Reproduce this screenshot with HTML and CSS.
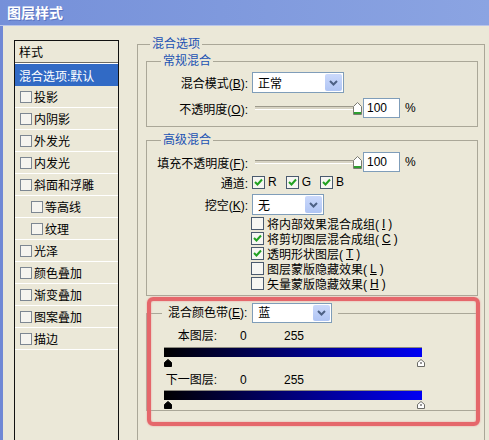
FILE: index.html
```html
<!DOCTYPE html>
<html lang="zh">
<head>
  <meta charset="UTF-8">
  <title>图层样式</title>
  <link rel="stylesheet" href="styles.css">
</head>
<body>
<div class="window">
  <div class="titlebar">图层样式</div>

  <div class="frame">
    <!-- left: style list -->
    <ul class="styles-list">
      <li class="list-head">样式</li>
      <li class="selected">混合选项:默认</li>
      <li><span class="box"></span>投影</li>
      <li><span class="box"></span>内阴影</li>
      <li><span class="box"></span>外发光</li>
      <li><span class="box"></span>内发光</li>
      <li><span class="box"></span>斜面和浮雕</li>
      <li class="sub"><span class="box"></span>等高线</li>
      <li class="sub"><span class="box"></span>纹理</li>
      <li><span class="box"></span>光泽</li>
      <li><span class="box"></span>颜色叠加</li>
      <li><span class="box"></span>渐变叠加</li>
      <li><span class="box"></span>图案叠加</li>
      <li><span class="box"></span>描边</li>
    </ul>

    <!-- right: blending options -->
    <div class="options">
      <fieldset class="group outer">
        <legend>混合选项</legend>

        <fieldset class="group">
          <legend>常规混合</legend>
          <div class="group-body normal">
            <div class="row tall">
              <span class="lbl">混合模式(<u>B</u>):</span>
              <div class="combo mode">正常<span class="arrow"><svg width="9" height="6" viewBox="0 0 9 6"><path d="M1 1 L4.5 4.5 L8 1" fill="none" stroke="#4d6185" stroke-width="2"/></svg></span></div>
            </div>
            <div class="row gap5">
              <span class="lbl">不透明度(<u>O</u>):</span>
              <div class="slider"><span class="track"></span><svg class="knob" width="9" height="13" viewBox="0 0 9 13"><path d="M0.5 4.5 L4.5 0.5 L8.5 4.5 V12.5 H0.5 Z" fill="#fff" stroke="#7a7a72"/><rect x="1" y="10" width="7" height="2" fill="#2e9e2e"/></svg></div>
              <span class="num">100</span>
              <span class="pct">%</span>
            </div>
          </div>
        </fieldset>

        <fieldset class="group advanced">
          <legend>高级混合</legend>
          <div class="group-body adv">
            <div class="row">
              <span class="lbl">填充不透明度(<u>F</u>):</span>
              <div class="slider"><span class="track"></span><svg class="knob" width="9" height="13" viewBox="0 0 9 13"><path d="M0.5 4.5 L4.5 0.5 L8.5 4.5 V12.5 H0.5 Z" fill="#fff" stroke="#7a7a72"/><rect x="1" y="10" width="7" height="2" fill="#2e9e2e"/></svg></div>
              <span class="num">100</span>
              <span class="pct">%</span>
            </div>
            <div class="row">
              <span class="lbl">通道:</span>
              <span class="chk"><span class="cb on"><svg width="9" height="9" viewBox="0 0 9 9"><path d="M1 4 L3.5 6.5 L8 1.5" fill="none" stroke="#21a121" stroke-width="2"/></svg></span>R</span>
              <span class="chk"><span class="cb on"><svg width="9" height="9" viewBox="0 0 9 9"><path d="M1 4 L3.5 6.5 L8 1.5" fill="none" stroke="#21a121" stroke-width="2"/></svg></span>G</span>
              <span class="chk"><span class="cb on"><svg width="9" height="9" viewBox="0 0 9 9"><path d="M1 4 L3.5 6.5 L8 1.5" fill="none" stroke="#21a121" stroke-width="2"/></svg></span>B</span>
            </div>
            <div class="row tall knockout">
              <span class="lbl">挖空(<u>K</u>):</span>
              <div class="combo ko">无<span class="arrow"><svg width="9" height="6" viewBox="0 0 9 6"><path d="M1 1 L4.5 4.5 L8 1" fill="none" stroke="#4d6185" stroke-width="2"/></svg></span></div>
            </div>
            <div class="checks">
              <div class="opt"><span class="cb"></span>将内部效果混合成组(<u>I</u>)</div>
              <div class="opt"><span class="cb on"><svg width="9" height="9" viewBox="0 0 9 9"><path d="M1 4 L3.5 6.5 L8 1.5" fill="none" stroke="#21a121" stroke-width="2"/></svg></span>将剪切图层混合成组(<u>C</u>)</div>
              <div class="opt"><span class="cb on"><svg width="9" height="9" viewBox="0 0 9 9"><path d="M1 4 L3.5 6.5 L8 1.5" fill="none" stroke="#21a121" stroke-width="2"/></svg></span>透明形状图层(<u>T</u>)</div>
              <div class="opt"><span class="cb"></span>图层蒙版隐藏效果(<u>L</u>)</div>
              <div class="opt"><span class="cb"></span>矢量蒙版隐藏效果(<u>H</u>)</div>
            </div>
          </div>
        </fieldset>

        <fieldset class="group band">
          <legend>
            <span>混合颜色带(<u>E</u>):</span>
            <span class="combo blue">蓝<span class="arrow"><svg width="9" height="6" viewBox="0 0 9 6"><path d="M1 1 L4.5 4.5 L8 1" fill="none" stroke="#4d6185" stroke-width="2"/></svg></span></span>
          </legend>
          <div class="band-body">
            <div class="band-head first">
              <span class="name">本图层:</span><span class="min">0</span><span>255</span>
            </div>
            <div class="bar"></div>
            <div class="stops">
              <svg width="8" height="8" viewBox="0 0 8 8"><path d="M0.5 3.5 L4 0.5 L7.5 3.5 V7.5 H0.5 Z" fill="#000" stroke="#000"/></svg>
              <svg width="8" height="8" viewBox="0 0 8 8"><path d="M0.5 3.5 L4 0.5 L7.5 3.5 V7.5 H0.5 Z" fill="#fff" stroke="#6b6b66"/><path d="M4 3 V5" stroke="#333"/></svg>
            </div>
            <div class="band-head">
              <span class="name">下一图层:</span><span class="min">0</span><span>255</span>
            </div>
            <div class="bar second"></div>
            <div class="stops second">
              <svg width="8" height="8" viewBox="0 0 8 8"><path d="M0.5 3.5 L4 0.5 L7.5 3.5 V7.5 H0.5 Z" fill="#000" stroke="#000"/></svg>
              <svg width="8" height="8" viewBox="0 0 8 8"><path d="M0.5 3.5 L4 0.5 L7.5 3.5 V7.5 H0.5 Z" fill="#fff" stroke="#6b6b66"/><path d="M4 3 V5" stroke="#333"/></svg>
            </div>
          </div>
        </fieldset>
      </fieldset>
    </div>
  </div>

  <!-- red annotation box drawn over the dialog -->
  <div class="mark"></div>
</div>
</body>
</html>
```

FILE: styles.css
```css
* {
  box-sizing: border-box;
}

html, body {
  margin: 0;
}

body {
  width: 489px;
  height: 440px;
  overflow: hidden;
  background: #ebe8d8;
  font-family: "Liberation Sans", "Noto Sans CJK SC", sans-serif;
  font-size: 12px;
  color: #000;
}

.window {
  position: relative;
  height: 440px;
}

.titlebar {
  height: 26px;
  padding: 4px 0 0 7px;
  line-height: 18px;
  font-size: 14px;
  font-weight: bold;
  color: #fff;
  background: linear-gradient(to right, #7590d9, #8ba4e2);
  border-bottom: 1px solid #b9c5ea;
  text-shadow: 1px 1px 0 #5a73c0;
}

.frame {
  display: flex;
  gap: 18px;
  height: 414px;
  border-left: 3px solid #7088d5;
  padding: 11px 0 0 11px;
}

/* style list */
.styles-list {
  list-style: none;
  margin: 3px 0 0;
  padding: 0;
  width: 105px;
  height: 420px;
  flex-shrink: 0;
  border: 1px solid #111;
}

.styles-list li {
  display: flex;
  align-items: center;
  gap: 2px;
  height: 22px;
  padding-left: 5px;
  border-bottom: 1px solid #fff;
}

.styles-list li.sub {
  padding-left: 16px;
}

.styles-list .list-head {
  padding-left: 4px;
  border-bottom: 1px solid #6d6b62;
  box-shadow: 0 1px 0 #fff;
}

.styles-list .selected {
  margin-top: 1px;
  padding-left: 4px;
  background: #316ac5;
  color: #fff;
  border-bottom: none;
}

.box {
  width: 12px;
  height: 12px;
  border: 1px solid #7d8792;
  background: #f5f4ef;
}

/* group boxes */
.options {
  flex: 1;
}

.group {
  margin: 0;
  padding: 0;
  min-width: 0;
  width: 332px;
  border: 1px solid #aaa798;
}

.group legend {
  margin-left: 14px;
  padding: 0 2px;
  line-height: 14px;
  color: #1b52b3;
}

.group.outer {
  width: 348px;
  height: 420px;
  padding: 3px 0 0 8px;
}

.group.outer > legend {
  margin-left: 4px;
}

.group-body.normal {
  padding: 4px 0 8px;
}

.group.advanced {
  margin-top: 6px;
}

.group-body.adv {
  padding: 5px 0 4px;
}

.row {
  display: flex;
  align-items: center;
  height: 20px;
}

.row.tall {
  height: 21px;
}

.row.gap5 {
  margin-top: 5px;
}

.row.knockout {
  margin-top: 2px;
}

.lbl {
  width: 105px;
  padding-right: 4px;
  text-align: right;
  white-space: nowrap;
}

.combo {
  display: flex;
  align-items: center;
  justify-content: space-between;
  height: 21px;
  padding: 0 1px 0 5px;
  border: 1px solid #7f9db9;
  background: #fff;
  color: #000;
}

.combo.mode { width: 92px; }
.combo.ko { width: 72px; }
.combo.blue { width: 80px; height: 20px; }

.arrow {
  display: flex;
  align-items: center;
  justify-content: center;
  width: 17px;
  height: 17px;
  border-radius: 2px;
  background: linear-gradient(#cbd9fb, #b0c5f4);
}

.combo.blue .arrow {
  height: 16px;
}

.slider {
  display: flex;
  align-items: center;
  width: 110px;
  padding-left: 3px;
}

.track {
  flex: 1;
  height: 4px;
  border-top: 1px solid #9d9a8c;
  border-bottom: 1px solid #fff;
  background: #d8d4c4;
}

.num {
  width: 37px;
  height: 20px;
  margin-left: 1px;
  padding-left: 3px;
  line-height: 18px;
  border: 1px solid #7f9db9;
  background: #fff;
}

.pct {
  margin-left: 5px;
}

.chk {
  display: flex;
  align-items: center;
  gap: 3px;
  margin-right: 9px;
}

.cb {
  display: flex;
  align-items: center;
  justify-content: center;
  width: 13px;
  height: 13px;
  border: 1px solid #4a5a6e;
  background: #f6f6f2;
}

.checks {
  margin-top: 1px;
  padding-left: 104px;
}

.opt {
  display: flex;
  align-items: center;
  gap: 3px;
  height: 15px;
}

/* blend-if band */
.group.band {
  margin-top: 7px;
}

.group.band legend {
  display: flex;
  align-items: center;
  gap: 5px;
  margin-left: 15px;
  padding: 0 6px;
  line-height: 20px;
  color: #000;
}

.band-body {
  padding: 0 0 1px 17px;
}

.band-head {
  display: flex;
  height: 14px;
  line-height: 14px;
  margin-top: 6px;
}

.band-head .name {
  width: 53px;
  text-align: right;
}

.band-head .min {
  width: 44px;
  margin-left: 23px;
}

.bar {
  width: 258px;
  height: 10px;
  margin-top: 4px;
  border-top: 1px solid #8d8b80;
  background: linear-gradient(to right, #000, #0000f4);
}

.bar.second {
  margin-top: 3px;
}

.stops {
  display: flex;
  justify-content: space-between;
  width: 261px;
  height: 8px;
  margin-top: 2px;
}

.stops.second {
  margin-top: 1px;
}

.mark {
  position: absolute;
  left: 147px;
  top: 297px;
  width: 333px;
  height: 129px;
  border: 4px solid #e5676b;
  border-radius: 6px;
  box-shadow: 0 0 2px #ec9a9c, inset 0 0 2px #ec9a9c;
}
```
